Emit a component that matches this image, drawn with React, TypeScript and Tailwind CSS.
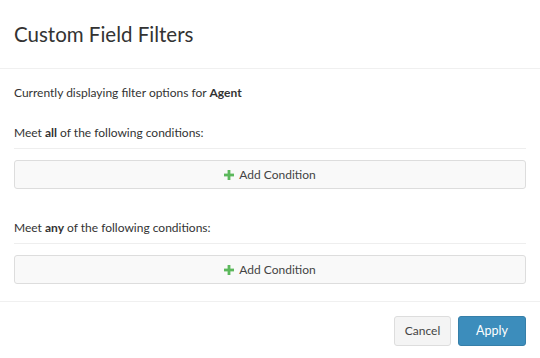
function PlusIcon() {
    return (
        <svg viewBox="0 0 10 10" className="w-[10px] h-[10px]" fill="#5cb85c">
            <rect x="3.6" y="0" width="2.8" height="10" />
            <rect x="0" y="3.6" width="10" height="2.8" />
        </svg>
    );
}

function AddConditionButton() {
    return (
        <button className="w-full h-[29px] flex items-center justify-center gap-[5px] border border-[#dddddd] bg-[#f9f9f9] rounded-[3px] text-[12px] text-[#444]">
            <PlusIcon />
            Add Condition
        </button>
    );
}

function ConditionGroup({ mode }: { mode: string }) {
    return (
        <div>
            <p className="text-[12px] text-[#333] h-[24px] flex items-center">
                Meet&nbsp;<b className="font-bold">{mode}</b>&nbsp;of the following conditions:
            </p>
            <div className="border-t border-[#eeeeee] mt-[3px] mb-[11px]" />
            <AddConditionButton />
        </div>
    );
}

export default function App() {
    return (
        <div className="w-[540px] h-[358px] bg-white font-['Lato',sans-serif] text-[#333]">
            <div className="h-[69px] flex items-center px-[14px] border-b border-[#f0f0f0]">
                <h1 className="text-[20.5px] text-[#333] font-normal">Custom Field Filters</h1>
            </div>
            <div className="px-[14px] pt-[12px] h-[232px] flex flex-col">
                <p className="text-[12px] h-[24px] flex items-center">
                    Currently displaying filter options for&nbsp;<b className="font-bold">Agent</b>
                </p>
                <div className="mt-[16px]">
                    <ConditionGroup mode="all" />
                </div>
                <div className="mt-[27px]">
                    <ConditionGroup mode="any" />
                </div>
            </div>
            <div className="border-t border-[#f0f0f0] flex justify-end gap-[7px] px-[14px] pt-[14px]">
                <button className="h-[30px] w-[57px] border border-[#dddddd] bg-[#f4f4f4] rounded-[3px] text-[12px] text-[#444]">
                    Cancel
                </button>
                <button className="h-[30px] w-[68px] border border-[#367fa9] bg-[#3c8dbc] rounded-[3px] text-[12.5px] text-white">
                    Apply
                </button>
            </div>
        </div>
    );
}
